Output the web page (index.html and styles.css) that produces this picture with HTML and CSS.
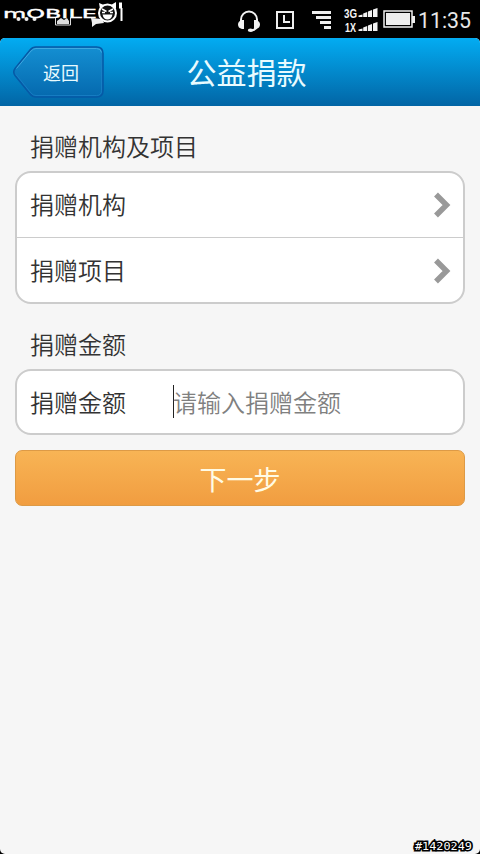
FILE: index.html
```html
<!DOCTYPE html>
<html lang="zh-CN">
<head>
<meta charset="utf-8">
<title>公益捐款</title>
<link rel="stylesheet" href="styles.css">
</head>
<body>
<header class="status">
  <svg class="brand" width="130" height="30" viewBox="0 0 130 30">
    <g fill="#eee"><circle cx="18.500" cy="19" r="2"/><circle cx="26.500" cy="19" r="2"/><circle cx="34.500" cy="19" r="2"/></g>
    <path d="M55.500 17.500v7.500h15v-7.500" fill="none" stroke="#ddd"/>
    <path d="M57 24v-3l4-3 3 2 3-2 2 3v3z" fill="#ddd"/>
    <path d="M91 18l11 1 2 4-8 1-4 3v-4z" fill="#eee"/>
    <text class="brand-text" transform="translate(3 17.500) scale(1.550 1)" textLength="60.500" lengthAdjust="spacingAndGlyphs">mOBILE</text>
    <path d="M100 9l-1-6 5 2M111 5l5-3v7" fill="#fff"/>
    <circle cx="107.500" cy="13" r="8.500" fill="#111" stroke="#fff" stroke-width="2"/>
    <path d="M102 9l4.500 2.500M113 9l-4.500 2.500M102 12.500h3M110 12.500h3" fill="none" stroke="#fff" stroke-width="1.500"/>
    <path d="M102.500 14.500h10q-1 5-5 5t-5-5z" fill="#fff"/>
    <path d="M119 2.500h3v6h-3zM120.500 8h2v13h-2z" fill="#fff"/>
  </svg>
  <div class="indicators">
    <svg class="headset" width="24" height="24" viewBox="0 0 24 24">
      <path d="M4 13V10.500a8 8 0 0 1 16 0v3" fill="none" stroke="#f2f2f2" stroke-width="2"/>
      <path d="M7 11v9H5q-4-1-4-4.500T5 11zM17 11v9h2q4-1 4-4.500T19 11z" fill="#f2f2f2"/>
      <path d="M20 18q-1 3-6 3.500" fill="none" stroke="#f2f2f2" stroke-width="2"/>
      <ellipse cx="13.500" cy="21.200" rx="2.700" ry="1.800" fill="#f2f2f2"/>
    </svg>
    <svg class="clock" width="18" height="18" viewBox="0 0 18 18">
      <path d="M1 1h16v16H1zM8 4v7h6" fill="none" stroke="#eee" stroke-width="2"/>
    </svg>
    <svg class="steps" width="20" height="18" viewBox="0 0 20 18">
      <path d="M0 0h19v3H0zM4 5h15v3H4zM8 10h11v3H8zM12 15h7v3h-7z" fill="#eee"/>
    </svg>
    <svg class="signal" width="36" height="28" viewBox="0 0 36 28">
      <text class="net" x="1" y="10.500" textLength="13" lengthAdjust="spacingAndGlyphs">3G</text>
      <text class="net" x="2" y="24.500" textLength="11" lengthAdjust="spacingAndGlyphs">1X</text>
      <g fill="#f2f2f2">
        <path id="bars" d="M15.500 10V8.500l4-1V10zM20.200 10V6.500l4-1.500V10zM25 10V4.500l4-1.500v7zM30 10V2.500l4.500-1.500v9z"/>
        <use href="#bars" y="14"/>
      </g>
    </svg>
    <svg class="battery" width="32" height="20" viewBox="0 0 32 20">
      <path d="M1 1h28v16H1z" fill="none" stroke="#eee" stroke-width="1.500"/>
      <path d="M3 3h24v12H3zM29 6h3v7h-3z" fill="#eee"/>
    </svg>
    <span class="time">11:35</span>
  </div>
</header>
<div class="app">
  <div class="navbar">
    <a class="back">
      <svg class="back-shape" width="92" height="53" viewBox="0 0 92 53">
        <defs><linearGradient id="g" x1="0" y1="0" x2="0" y2="1"><stop offset="0" stop-color="#148fd2"/><stop offset="1" stop-color="#0569ae"/></linearGradient></defs>
        <path d="M24 1H84.500Q91 1 91 7.500V44.500Q91 51 84.500 51H24Q20.500 51 18 48L3 29.500Q.500 26 3 22.500L18 4Q20.500 1 24 1z" fill="url(#g)" stroke="#0659a6" stroke-width="1.500"/>
        <path d="M4.500 22.500L19 5Q21.500 2.500 24 2.500H84.500Q89 2.500 89.500 6.500" fill="none" stroke="#3ea9e0"/>
        <path d="M89.500 7.500V44.500Q89.500 49.500 84.500 49.500H24Q21 49.500 19 47L4 28.500" fill="none" stroke="#1b82c6" stroke-width=".800"/>
      </svg>
      <span class="back-label">返回</span>
    </a>
    <h1 class="title">公益捐款</h1>
  </div>
  <main class="content">
    <h2 class="section">捐赠机构及项目</h2>
    <div class="card">
      <div class="row"><span class="row-label">捐赠机构</span><svg width="18" height="26" viewBox="0 0 18 26"><path d="M3 2.500L13.500 13 3 23.500" fill="none" stroke="#999" stroke-width="5.500"/></svg></div>
      <div class="row"><span class="row-label">捐赠项目</span><svg width="18" height="26" viewBox="0 0 18 26"><path d="M3 2.500L13.500 13 3 23.500" fill="none" stroke="#999" stroke-width="5.500"/></svg></div>
    </div>
    <h2 class="section second">捐赠金额</h2>
    <div class="card field">
      <span class="field-label">捐赠金额</span><span class="caret"></span><span class="placeholder">请输入捐赠金额</span>
    </div>
    <div class="next">下一步</div>
  </main>
  <svg class="stamp" width="66" height="14" viewBox="0 0 66 14"><text class="stamp-text" x="3" y="11" textLength="57" lengthAdjust="spacingAndGlyphs">#1420249</text></svg>
</div>
</body>
</html>
```
FILE: styles.css
```css
* { box-sizing: border-box; }
body {
  margin: 0;
  width: 480px;
  height: 854px;
  overflow: hidden;
  display: flex;
  flex-direction: column;
  background: #000;
  color: #333;
  font-family: "Noto Sans CJK SC", sans-serif;
  font-weight: 350;
}
svg { display: block; flex: none; }
.status { height: 38px; display: flex; justify-content: space-between; }
.brand-text { font: 400 13px "DejaVu Sans", sans-serif; fill: #fff; stroke: #fff; stroke-width: .4px; }
.indicators { display: flex; align-items: flex-start; padding-right: 9px; }
.headset { margin: 9px 15px 0 0; }
.clock { margin: 11px 18px 0 0; }
.steps { margin: 11px 11px 0 0; }
.signal { margin: 7px 4px 0 0; }
.battery { margin: 10px 3px 0 0; }
.net { font: 700 12px "Liberation Sans", sans-serif; fill: #f4f4f4; }
.time { font: 400 21.3px/38px Roboto, sans-serif; color: #e8e8e8; padding-top: 2px; width: 53px; white-space: nowrap; }
.app { position: relative; flex: 1; background: #f6f6f6; border-radius: 5px; overflow: hidden; }
.navbar {
  height: 68px;
  display: grid;
  grid-template-columns: 107px 1fr 94px;
  align-items: center;
  background: linear-gradient(#03acf2, #0265a5);
}
.back { display: grid; margin-left: 12px; width: 92px; height: 53px; }
.back-shape, .back-label { grid-area: 1 / 1; }
.back-label { font-size: 18px; line-height: 53px; padding-left: 31px; color: #e9fbff; font-weight: 400; z-index: 1; }
.title { margin: 0; text-align: center; font-size: 30px; font-weight: 400; line-height: 66px; height: 68px; color: #e9fbff; }
.content { padding: 23px 15px 0; }
.section { margin: 0; padding-left: 15px; font-size: 24px; font-weight: 350; line-height: 34px; height: 42px; }
.second { margin-top: 23px; }
.card { background: #fff; border: 2px solid #ccc; border-radius: 16px; }
.row { height: 64px; display: flex; align-items: center; justify-content: space-between; padding: 0 12px 0 13px; font-size: 24px; line-height: 36px; }
.row-label { padding-bottom: 2px; }
.row + .row { height: 65px; border-top: 1px solid #ccc; padding-top: 1px; }
.field { height: 66px; display: flex; align-items: center; padding-left: 13px; font-size: 24px; line-height: 36px; }
.field-label { width: 143px; }
.caret { width: 1px; height: 33px; background: #222; margin: 0 -1px 1px 0; }
.placeholder { color: #808080; }
.next {
  margin-top: 15px;
  height: 56px;
  border: 1px solid #dd9a46;
  border-radius: 7px;
  background: linear-gradient(#f8b455, #f19d40);
  color: #fffbe5;
  font-size: 27px;
  font-weight: 400;
  line-height: 55px;
  text-align: center;
}
.stamp { position: absolute; right: 2px; bottom: 1px; }
.stamp-text { font: 400 10px "DejaVu Sans Mono", monospace; fill: #fff; stroke: #000; stroke-width: 3px; paint-order: stroke; }
```
